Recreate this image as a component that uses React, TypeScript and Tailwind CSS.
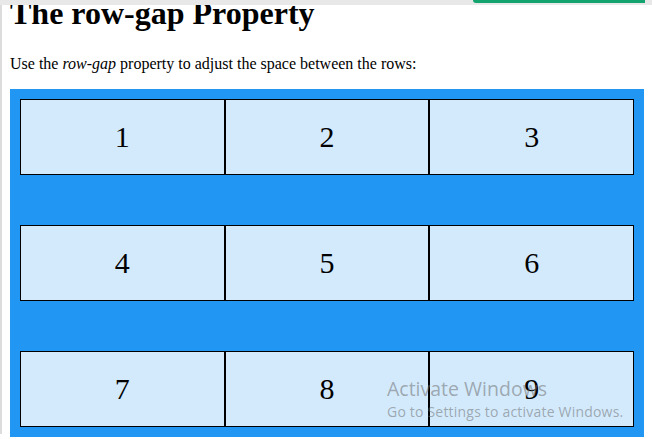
import React from 'react';

const cells = [1, 2, 3, 4, 5, 6, 7, 8, 9];

const App: React.FC = () => {
    return (
        <div className="relative h-[439px] w-[652px] overflow-hidden bg-white font-['Liberation_Serif',serif] text-black">
            {/* browser chrome strip */}
            <div className="absolute left-0 top-0 z-20 h-[5px] w-full bg-[#e8e8e8]">
                <div className="absolute left-[473px] top-0 h-[3px] w-[172px] rounded-bl-[4px] bg-[#12a36f]"></div>
            </div>

            <div className="h-full border-l-2 border-[#dcdcdc] px-2">
                <h1 className="mt-[-5px] mb-[23px] text-[32px] leading-[37px] font-bold">The row-gap Property</h1>
                <p className="mb-4 text-[16px] leading-[18px]">
                    Use the <em>row-gap</em> property to adjust the space between the rows:
                </p>

                <div className="grid grid-cols-3 gap-y-[50px] bg-[#2196F3] p-[10px]">
                    {cells.map((n) => (
                        <div
                            key={n}
                            className="border border-black bg-white/80 py-5 text-center text-[30px] leading-[34px]"
                        >
                            {n}
                        </div>
                    ))}
                </div>
            </div>

            {/* windows watermark */}
            <div className="pointer-events-none absolute left-[387px] top-[376px] z-10 font-['Open_Sans',sans-serif] text-[rgba(110,110,110,0.55)]">
                <div className="text-[19.5px] leading-[26px]">Activate Windows</div>
                <div className="mt-[1px] text-[14px] leading-[18px] tracking-[0.2px]">Go to Settings to activate Windows.</div>
            </div>
        </div>
    );
};

export default App;
